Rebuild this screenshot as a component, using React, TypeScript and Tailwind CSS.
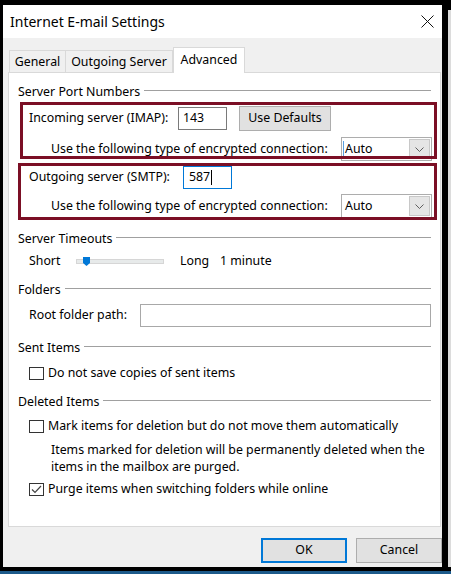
import React from 'react';

const font = { fontFamily: '"Noto Sans", "Open Sans", sans-serif' };

const Heading = ({ text, className }: { text: string; className?: string }) => (
  <div className={`flex items-center gap-[4px] h-[16px] ${className ?? ''}`}>
    <span className="whitespace-nowrap leading-[16px] pt-[1px]">{text}</span>
    <div className="flex-1 h-px bg-[#a0a0a0] mt-[-1px]" />
  </div>
);

const Chevron = () => (
  <svg width="9" height="5" viewBox="0 0 9 5">
    <polyline points="0.5,0.5 4.5,4.5 8.5,0.5" fill="none" stroke="#5f5f5f" strokeWidth="1" />
  </svg>
);

const Select = ({ focused }: { focused?: boolean }) => (
  <div className="ml-auto mr-[-1px] w-[91px] h-[24px] border border-[#adadad] bg-white flex items-center relative">
    {focused && <div className="absolute left-[1px] top-[3px] w-px h-[16px] bg-[#5aa0e0]" />}
    <span className="pl-[3px] flex-1 leading-[16px]">Auto</span>
    <div className="w-[21px] h-[20px] mr-[1px] bg-[#e5e5e5] border border-[#c8c8c8] flex items-center justify-center">
      <Chevron />
    </div>
  </div>
);

const Checkbox = ({ checked }: { checked?: boolean }) => (
  <div className="w-[15px] h-[13px] border border-[#333333] bg-white flex items-center justify-center shrink-0">
    {checked && (
      <svg width="11" height="9" viewBox="0 0 11 9">
        <polyline points="1,4.5 4,7.5 10,1" fill="none" stroke="#444444" strokeWidth="1.2" />
      </svg>
    )}
  </div>
);

const CheckRow = ({ text, checked, className }: { text: string; checked?: boolean; className?: string }) => (
  <div className={`flex items-center h-[16px] gap-[4px] pl-[11px] ${className ?? ''}`}>
    <Checkbox checked={checked} />
    <span className="whitespace-nowrap leading-[16px]">{text}</span>
  </div>
);

const App = () => {
  return (
    <div className="w-[451px] h-[574px] bg-black flex flex-col text-[12.35px] text-black overflow-hidden" style={font}>
      <div className="flex h-[567px] pt-[5px]">
        <div className="w-[3px]" />
        <div className="w-[439px] flex flex-col">
          {/* title bar */}
          <div className="h-[33px] bg-white flex items-center pl-[7px] pr-[8px]">
            <span className="text-[14px] leading-[20px] flex-1">Internet E-mail Settings</span>
            <svg width="13" height="13" viewBox="0 0 13 13">
              <line x1="0.5" y1="0.5" x2="12.5" y2="12.5" stroke="#111" strokeWidth="1" />
              <line x1="12.5" y1="0.5" x2="0.5" y2="12.5" stroke="#111" strokeWidth="1" />
            </svg>
          </div>

          {/* body */}
          <div className="flex-1 bg-[#f0f0f0] flex flex-col pl-[5px] pt-[9px]">
            {/* tabs */}
            <div className="flex items-end pl-[1px] h-[26px] mb-[-1px] relative z-10">
              <div className="w-[57px] h-[23px] border border-b-0 border-[#d9d9d9] flex items-center justify-center">
                General
              </div>
              <div className="w-[107px] h-[23px] border border-l-0 border-b-0 border-[#d9d9d9] flex items-center justify-center">
                Outgoing Server
              </div>
              <div className="w-[72px] h-[26px] bg-white border border-b-0 border-[#d9d9d9] flex items-start justify-center pt-[3px]">
                Advanced
              </div>
            </div>

            {/* panel */}
            <div className="w-[433px] h-[455px] bg-white border border-[#d9d9d9] flex flex-col pl-[9px] pr-[9px] pt-[10px]">
              <Heading text="Server Port Numbers" />

              <div className="relative mt-[7px] flex flex-col pl-[11px]">
                <div className="flex items-center h-[25px]">
                  <span className="w-[149px] whitespace-nowrap">Incoming server (IMAP):</span>
                  <div className="w-[49px] h-[23px] border border-[#7a7a7a] flex items-center pl-[4px]">143</div>
                  <div className="ml-[12px] w-[92px] h-[25px] bg-[#e1e1e1] border border-[#adadad] flex items-center justify-center">
                    Use Defaults
                  </div>
                </div>
                <div className="flex items-center h-[24px] mt-[6px]">
                  <span className="pl-[22px] whitespace-nowrap">Use the following type of encrypted connection:</span>
                  <Select focused />
                </div>
                <div className="flex items-center h-[23px] mt-[5px]">
                  <span className="w-[154px] whitespace-nowrap">Outgoing server (SMTP):</span>
                  <div className="w-[49px] h-[23px] border border-[#0078d7] flex items-center pl-[5px]">
                    587
                    <div className="w-px h-[15px] bg-black ml-[1px]" />
                  </div>
                </div>
                <div className="flex items-center h-[24px] mt-[5px]">
                  <span className="pl-[22px] whitespace-nowrap">Use the following type of encrypted connection:</span>
                  <Select />
                </div>

                {/* highlight annotations */}
                <div className="absolute left-[2px] top-[-4px] w-[417px] h-[57px] border-[3px] border-[#7b0f25] pointer-events-none" />
                <div className="absolute left-[0px] top-[57px] w-[419px] h-[57px] border-[3px] border-[#7b0f25] pointer-events-none" />
              </div>

              <Heading text="Server Timeouts" className="mt-[12px]" />
              <div className="flex items-center h-[16px] mt-[7px] pl-[11px]">
                <span className="w-[47px]">Short</span>
                <div className="relative w-[88px] h-[5px] bg-[#e7eaea] border border-[#d6d6d6]">
                  <svg className="absolute left-[6px] top-[-3px]" width="7" height="9" viewBox="0 0 7 9">
                    <path d="M0 0 H7 V6 L3.5 9 L0 6 Z" fill="#0078d7" />
                  </svg>
                </div>
                <span className="ml-[16px] w-[40px]">Long</span>
                <span>1 minute</span>
              </div>

              <Heading text="Folders" className="mt-[12px]" />
              <div className="flex items-center h-[23px] mt-[7px] pl-[11px]">
                <span className="w-[111px] whitespace-nowrap">Root folder path:</span>
                <div className="w-[292px] h-[23px] border border-[#a8a8a8]" />
              </div>

              <Heading text="Sent Items" className="mt-[12px]" />
              <CheckRow text="Do not save copies of sent items" className="mt-[10px]" />

              <Heading text="Deleted Items" className="mt-[12px]" />
              <CheckRow text="Mark items for deletion but do not move them automatically" className="mt-[9px]" />
              <div className="pl-[33px] mt-[7px] leading-[17px]">
                <div className="whitespace-nowrap">Items marked for deletion will be permanently deleted when the</div>
                <div className="whitespace-nowrap">items in the mailbox are purged.</div>
              </div>
              <CheckRow text="Purge items when switching folders while online" checked className="mt-[6px]" />
            </div>

            {/* buttons */}
            <div className="flex justify-end gap-[9px] mt-[11px] h-[25px]">
              <div className="w-[86px] h-[25px] bg-[#e1e1e1] border-2 border-[#0078d7] flex items-center justify-center">
                OK
              </div>
              <div className="w-[86px] h-[25px] bg-[#e1e1e1] border border-[#adadad] flex items-center justify-center">
                Cancel
              </div>
            </div>
          </div>
        </div>
        <div className="w-[6px]" />
        <div className="w-[3px] mt-[5px] bg-[#dcdcdc]" />
      </div>
      <div className="h-[4px]" />
      <div className="h-[3px] bg-[#1c5a8a]" />
    </div>
  );
};

export default App;
